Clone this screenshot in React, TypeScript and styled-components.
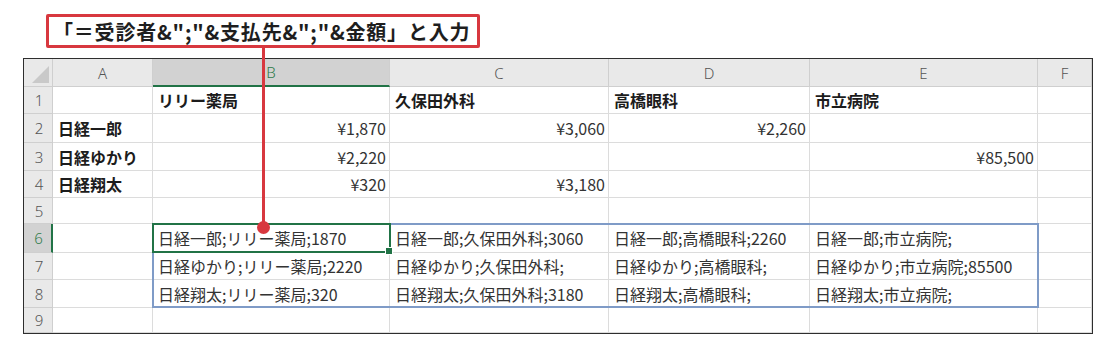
import React from "react";
import styled, { createGlobalStyle, css } from "styled-components";

const Global = createGlobalStyle`
  html, body { margin: 0; padding: 0; background: #ffffff; }
  body { font-family: "Noto Sans CJK JP", "Noto Sans", sans-serif; }
`;

const Page = styled.div`
  position: relative;
  width: 1116px;
  height: 349px;
  padding-top: 14px;
  box-sizing: border-box;
  overflow: hidden;
`;

const Callout = styled.div`
  margin-left: 46px;
  width: 434px;
  height: 34px;
  box-sizing: border-box;
  border: 3px solid #d8383f;
  border-radius: 2px;
  background: #fff;
  display: flex;
  align-items: center;
  padding-left: 4px;
  font-family: "Noto Sans CJK JP", sans-serif;
  font-weight: 700;
  font-size: 20px;
  letter-spacing: 0.8px;
  color: #1e1e1e;
  white-space: nowrap;
`;

const Leader = styled.div`
  position: absolute;
  left: 262px;
  top: 48px;
  width: 3px;
  height: 180px;
  background: #d8383f;
  z-index: 5;
`;

const Dot = styled.div`
  position: absolute;
  left: 257px;
  top: 221px;
  width: 13px;
  height: 13px;
  border-radius: 50%;
  background: #d8383f;
  z-index: 5;
`;

const COLS = [29, 100, 237, 219, 201, 228, 54];
const ROWS = [28, 27, 29, 28, 27, 26, 29, 27, 28, 25];

const Sheet = styled.div`
  margin: 10px 0 0 23px;
  width: ${COLS.reduce((a, b) => a + b, 0)}px;
  border: 1px solid #2e2e2e;
  display: grid;
  grid-template-columns: ${COLS.map((c) => c + "px").join(" ")};
  grid-template-rows: ${ROWS.map((r) => r + "px").join(" ")};
  background: #fff;
`;

const Placed = css<{ $r: number; $c: number }>`
  grid-row: ${(p) => p.$r} / span 1;
  grid-column: ${(p) => p.$c} / span 1;
`;

const HeadCell = styled.div<{ $r: number; $c: number; $sel?: boolean; $row?: boolean }>`
  ${Placed}
  box-sizing: border-box;
  background: ${(p) => (p.$sel ? "#d2d2d2" : "#e9e9e9")};
  border-right: 1px solid #cfcfcf;
  border-bottom: 1px solid #cfcfcf;
  display: flex;
  align-items: center;
  justify-content: center;
  font-family: "Noto Sans", "DejaVu Sans", sans-serif;
  font-weight: 300;
  font-size: 15px;
  color: ${(p) => (p.$sel ? "#2e7a49" : "#555")};
  ${(p) =>
    p.$sel && !p.$row &&
    css`
      border-bottom: 2px solid #217346;
    `}
  ${(p) =>
    p.$sel && p.$row &&
    css`
      border-right: 2px solid #217346;
    `}
  ${(p) =>
    p.$row &&
    css`
      padding-left: 2px;
    `}
`;

const Corner = styled.div`
  grid-row: 1;
  grid-column: 1;
  box-sizing: border-box;
  background: #e9e9e9;
  border-right: 1px solid #cfcfcf;
  border-bottom: 1px solid #cfcfcf;
  position: relative;
  &::after {
    content: "";
    position: absolute;
    right: 3px;
    bottom: 3px;
    width: 0;
    height: 0;
    border-left: 17px solid transparent;
    border-bottom: 17px solid #c9c9c9;
  }
`;

const Cell = styled.div<{ $r: number; $c: number; $bold?: boolean; $right?: boolean }>`
  ${Placed}
  box-sizing: border-box;
  border-right: 1px solid #dcdcdc;
  border-bottom: 1px solid #dcdcdc;
  display: flex;
  align-items: center;
  justify-content: ${(p) => (p.$right ? "flex-end" : "flex-start")};
  padding: 0 3px 0 5px;
  font-family: "Noto Sans CJK JP", sans-serif;
  font-size: 16px;
  font-weight: ${(p) => (p.$bold ? 700 : 400)};
  color: ${(p) => (p.$bold ? "#1c1c1c" : "#333")};
  white-space: nowrap;
`;

const RangeBox = styled.div`
  grid-column: 3 / 7;
  grid-row: 7 / 10;
  border: 2px solid #7f9bc7;
  margin: -1px -1px 0 -1px;
  pointer-events: none;
  z-index: 2;
`;

const ActiveBox = styled.div`
  grid-column: 3 / 4;
  grid-row: 7 / 8;
  border: 2px solid #217346;
  margin: -1px -1px 0 -1px;
  pointer-events: none;
  position: relative;
  z-index: 3;
  &::after {
    content: "";
    position: absolute;
    right: -4px;
    bottom: -4px;
    width: 6px;
    height: 6px;
    background: #217346;
    border: 1px solid #fff;
  }
`;

type Val = { t: string; b?: boolean; r?: boolean } | null;

const data: Val[][] = [
  [null, { t: "リリー薬局", b: true }, { t: "久保田外科", b: true }, { t: "高橋眼科", b: true }, { t: "市立病院", b: true }, null],
  [{ t: "日経一郎", b: true }, { t: "¥1,870", r: true }, { t: "¥3,060", r: true }, { t: "¥2,260", r: true }, null, null],
  [{ t: "日経ゆかり", b: true }, { t: "¥2,220", r: true }, null, null, { t: "¥85,500", r: true }, null],
  [{ t: "日経翔太", b: true }, { t: "¥320", r: true }, { t: "¥3,180", r: true }, null, null, null],
  [null, null, null, null, null, null],
  [null, { t: "日経一郎;リリー薬局;1870" }, { t: "日経一郎;久保田外科;3060" }, { t: "日経一郎;高橋眼科;2260" }, { t: "日経一郎;市立病院;" }, null],
  [null, { t: "日経ゆかり;リリー薬局;2220" }, { t: "日経ゆかり;久保田外科;" }, { t: "日経ゆかり;高橋眼科;" }, { t: "日経ゆかり;市立病院;85500" }, null],
  [null, { t: "日経翔太;リリー薬局;320" }, { t: "日経翔太;久保田外科;3180" }, { t: "日経翔太;高橋眼科;" }, { t: "日経翔太;市立病院;" }, null],
  [null, null, null, null, null, null],
];

const letters = ["A", "B", "C", "D", "E", "F"];

export default function App() {
  return (
    <Page>
      <Global />
      <Callout>「＝受診者&amp;";"&amp;支払先&amp;";"&amp;金額」と入力</Callout>
      <Sheet>
        <Corner />
        {letters.map((l, i) => (
          <HeadCell key={l} $r={1} $c={i + 2} $sel={l === "B"}>
            {l}
          </HeadCell>
        ))}
        {data.map((row, ri) => (
          <React.Fragment key={ri}>
            <HeadCell $r={ri + 2} $c={1} $row $sel={ri === 5}>
              {ri + 1}
            </HeadCell>
            {row.map((v, ci) => (
              <Cell key={ci} $r={ri + 2} $c={ci + 2} $bold={v?.b} $right={v?.r}>
                {v?.t}
              </Cell>
            ))}
          </React.Fragment>
        ))}
        <RangeBox />
        <ActiveBox />
      </Sheet>
      <Leader />
      <Dot />
    </Page>
  );
}
